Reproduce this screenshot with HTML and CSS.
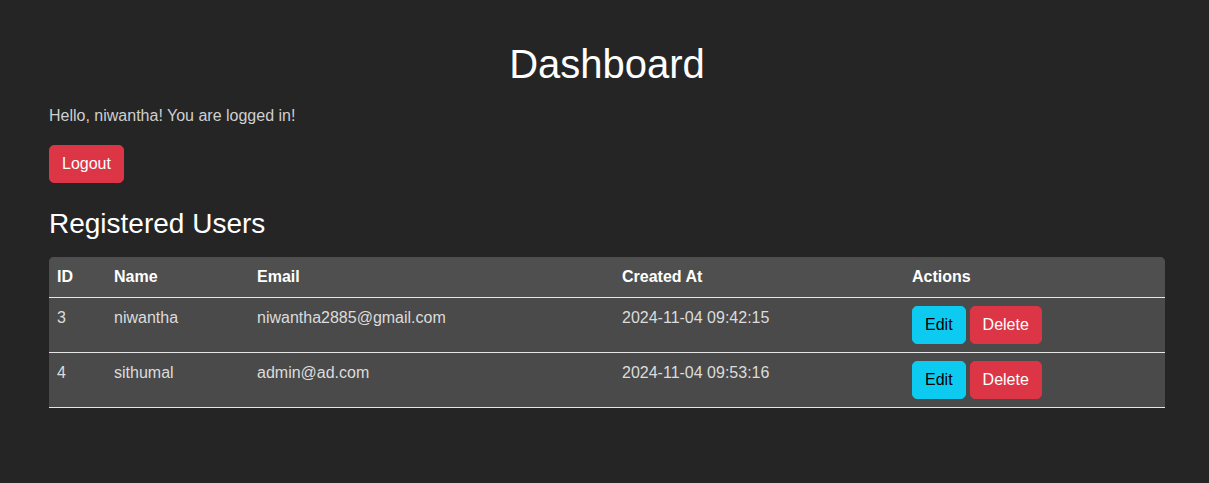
FILE: index.html
```html
<!DOCTYPE html>
<html lang="en">
<head>
<meta charset="utf-8">
<title>Dashboard</title>
<link rel="stylesheet" href="styles.css">
</head>
<body>
<div class="container">
  <h1 class="title">Dashboard</h1>
  <p class="greeting">Hello, niwantha! You are logged in!</p>
  <div class="logout-row">
    <button class="btn btn-danger">Logout</button>
  </div>
  <h2 class="section-title">Registered Users</h2>
  <table class="users">
    <colgroup>
      <col class="c-id"><col class="c-name"><col class="c-email"><col class="c-created"><col class="c-actions">
    </colgroup>
    <thead>
      <tr><th>ID</th><th>Name</th><th>Email</th><th>Created At</th><th>Actions</th></tr>
    </thead>
    <tbody>
      <tr>
        <td>3</td><td>niwantha</td><td>niwantha2885@gmail.com</td><td>2024-11-04 09:42:15</td>
        <td><div class="actions"><button class="btn btn-info">Edit</button><button class="btn btn-danger">Delete</button></div></td>
      </tr>
      <tr>
        <td>4</td><td>sithumal</td><td>admin@ad.com</td><td>2024-11-04 09:53:16</td>
        <td><div class="actions"><button class="btn btn-info">Edit</button><button class="btn btn-danger">Delete</button></div></td>
      </tr>
    </tbody>
  </table>
</div>
</body>
</html>
```
FILE: styles.css
```css
html, body {
  margin: 0;
  padding: 0;
  background: #252525;
}
body {
  font-family: "Liberation Sans", Arial, sans-serif;
  font-size: 16px;
  line-height: 1.5;
  color: #dcdcdc;
}
.container {
  width: 1116px;
  margin-left: 49px;
  padding-top: 40px;
}
.title {
  margin: 0 0 16px;
  font-size: 40px;
  font-weight: 400;
  line-height: 1.2;
  text-align: center;
  color: #ffffff;
}
.greeting {
  margin: 0 0 17px;
  color: #cfcfcf;
}
.logout-row {
  margin-bottom: 24px;
}
.btn {
  display: inline-block;
  font-family: inherit;
  font-size: 16px;
  line-height: 24px;
  padding: 6px 12px;
  border: 1px solid transparent;
  border-radius: 5px;
  cursor: pointer;
}
.btn-danger {
  background: #dc3545;
  border-color: #dc3545;
  color: #ffffff;
}
.btn-info {
  background: #0dcaf0;
  border-color: #0dcaf0;
  color: #000000;
}
.section-title {
  margin: 0 0 16px;
  font-size: 28px;
  font-weight: 400;
  line-height: 1.2;
  color: #ffffff;
}
.users {
  width: 1116px;
  table-layout: fixed;
  border-collapse: separate;
  border-spacing: 0;
  background: #4a4a4a;
  border-radius: 5px 5px 0 0;
}
.c-id { width: 57px; }
.c-name { width: 143px; }
.c-email { width: 365px; }
.c-created { width: 290px; }
.c-actions { width: 261px; }
.users th {
  background: #4f4f4f;
  color: #ffffff;
  font-weight: 700;
  text-align: left;
  padding: 8px;
  line-height: 24px;
  border-bottom: 1px solid #e6e6e6;
}
.users th:first-child { border-top-left-radius: 5px; }
.users th:last-child { border-top-right-radius: 5px; }
.users td {
  padding: 8px;
  line-height: 24px;
  vertical-align: top;
  color: #dcdcdc;
  border-bottom: 1px solid #e6e6e6;
}
.actions {
  display: flex;
  gap: 4px;
}
```
